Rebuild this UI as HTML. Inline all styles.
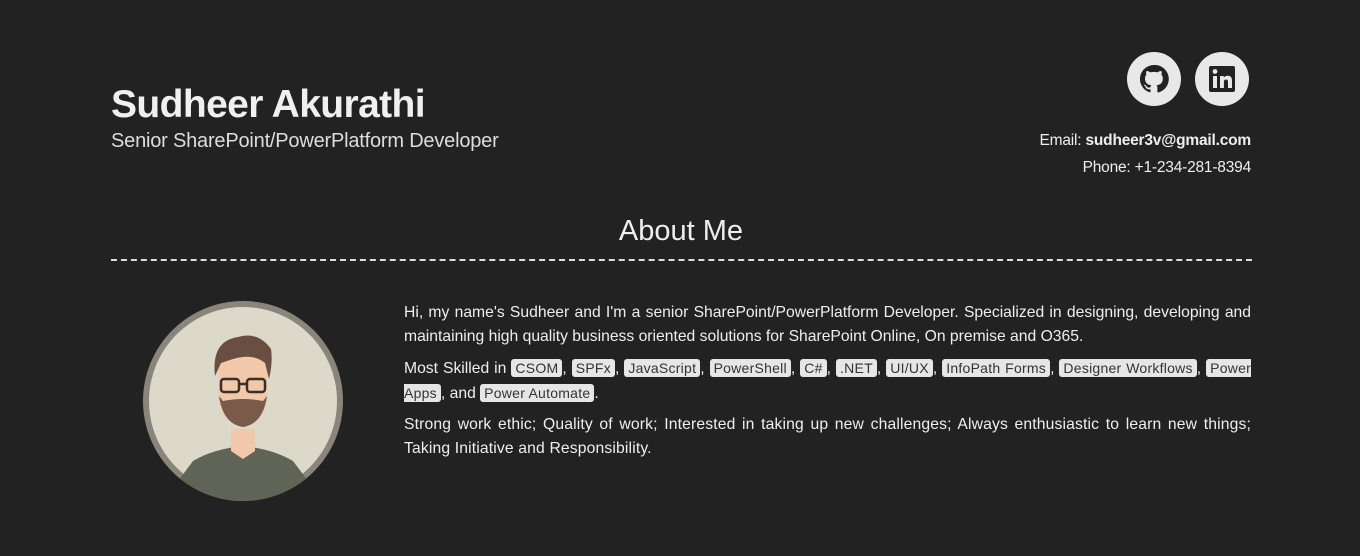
<!DOCTYPE html>
<html><head><meta charset="utf-8"><style>
*{margin:0;padding:0;box-sizing:border-box}
body{width:1360px;height:556px;background:#222;color:#eee;font-family:"Liberation Sans",sans-serif;position:relative;overflow:hidden}
.name{position:absolute;left:111px;top:83px;font-size:39px;font-weight:bold;letter-spacing:-0.6px;color:#f0f0f0}
.sub{position:absolute;left:111px;top:130px;font-size:20px;letter-spacing:-0.2px;color:#ddd}
.icon{position:absolute;top:52px;width:54px;height:54px;border-radius:50%;background:#e8e8e8}
.contact{position:absolute;right:109px;font-size:15.5px;text-align:right;letter-spacing:-0.2px}
.about{position:absolute;left:0;width:1362px;top:215px;text-align:center;font-size:29px;color:#eee}
.line{position:absolute;left:111px;width:1141px;top:259px;border-top:2px dashed #ddd}
.av{position:absolute;left:143px;top:301px;width:200px;height:200px;border-radius:50%;background:#8a857a;overflow:hidden}
.txt{position:absolute;left:404px;top:301px;width:847px;font-size:15.7px;line-height:24px;text-align:justify;letter-spacing:0}
.txt p{margin-bottom:7px}
.txt p.l{letter-spacing:0.15px}
code{font-family:"Liberation Sans",sans-serif;background:#e6e6e6;color:#333;border-radius:3px;padding:1px 4px;font-size:14px;letter-spacing:0.25px}
</style></head><body>
<div class="name">Sudheer Akurathi</div>
<div class="sub">Senior SharePoint/PowerPlatform Developer</div>
<div class="icon" style="left:1127px"><svg width="54" height="54" viewBox="0 0 54 54"><path fill="#222" d="M27 13a14 14 0 0 0-4.4 27.3c.7.1.9-.3.9-.7v-2.4c-3.900.8-4.700-1.700-4.700-1.700-.6-1.600-1.600-2-1.600-2-1.300-.9.1-.9.1-.9 1.400.1 2.100 1.400 2.100 1.400 1.300 2.200 3.300 1.500 4.100 1.200.1-.9.5-1.500.9-1.900-3.100-.4-6.400-1.600-6.400-6.900 0-1.500.5-2.800 1.400-3.700-.1-.4-.6-1.800.1-3.700 0 0 1.200-.4 3.900 1.400a13 13 0 0 1 7 0c2.700-1.800 3.900-1.400 3.900-1.400.8 1.900.3 3.300.1 3.700.9 1 1.400 2.200 1.400 3.700 0 5.400-3.300 6.500-6.400 6.900.5.4 1 1.300 1 2.600v3.900c0 .4.2.8 1 .7A14 14 0 0 0 27 13z"/></svg></div>
<div class="icon" style="left:1195px"><svg width="54" height="54" viewBox="0 0 54 54"><rect x="14" y="14" width="26" height="26" rx="2" fill="#222"/><rect x="18" y="24" width="4" height="12" fill="#e8e8e8"/><circle cx="20" cy="19.5" r="2.4" fill="#e8e8e8"/><path fill="#e8e8e8" d="M25 24h3.8v1.7c.6-1 1.9-2 3.9-2 4 0 4.3 2.6 4.3 6V36h-4v-5.4c0-1.4 0-3.1-1.9-3.1s-2.2 1.5-2.2 3V36H25z"/></svg></div>
<div class="contact" style="top:132px">Email: <b>sudheer3v@gmail.com</b></div>
<div class="contact" style="top:159px">Phone: +1-234-281-8394</div>
<div class="about">About Me</div>
<div class="line"></div>
<div class="av"><svg width="200" height="200" viewBox="0 0 200 200">
<circle cx="100" cy="100" r="94" fill="#dcd9cb"/>
<path d="M20 200 L50 160 Q70 148 100 145 Q130 148 150 160 L180 200Z" fill="#5f6456"/>
<path d="M88 128 h24 v22 l-12 8 l-12 -8z" fill="#f1c9aa"/>
<path d="M75 70 Q75 45 100 44 Q125 45 125 70 L124 100 Q120 122 100 125 Q80 122 76 100Z" fill="#f1c9aa"/>
<path d="M76 95 Q80 123 100 126 Q120 123 124 95 L120 100 Q100 96 80 100Z" fill="#7a5a48"/>
<path d="M72 75 Q68 40 95 36 Q115 30 128 48 Q130 62 126 78 L122 62 Q110 52 90 58 L78 62Z" fill="#6b4e42"/>
<rect x="78" y="78" width="18" height="13" rx="3" fill="none" stroke="#3a2e2a" stroke-width="2.5"/>
<rect x="104" y="78" width="18" height="13" rx="3" fill="none" stroke="#3a2e2a" stroke-width="2.5"/>
<path d="M96 83h8" stroke="#3a2e2a" stroke-width="2.5"/>
</svg></div>
<div class="txt">
<p>Hi, my name's Sudheer and I'm a senior SharePoint/PowerPlatform Developer. Specialized in designing, developing and maintaining high quality business oriented solutions for SharePoint Online, On premise and O365.</p>
<p>Most Skilled in <code>CSOM</code>, <code>SPFx</code>, <code>JavaScript</code>, <code>PowerShell</code>, <code>C#</code>, <code>.NET</code>, <code>UI/UX</code>, <code>InfoPath Forms</code>, <code>Designer Workflows</code>, <code>Power Apps</code>, and <code>Power Automate</code>.</p>
<p class="l">Strong work ethic; Quality of work; Interested in taking up new challenges; Always enthusiastic to learn new things; Taking Initiative and Responsibility.</p>
</div>
</body></html>
